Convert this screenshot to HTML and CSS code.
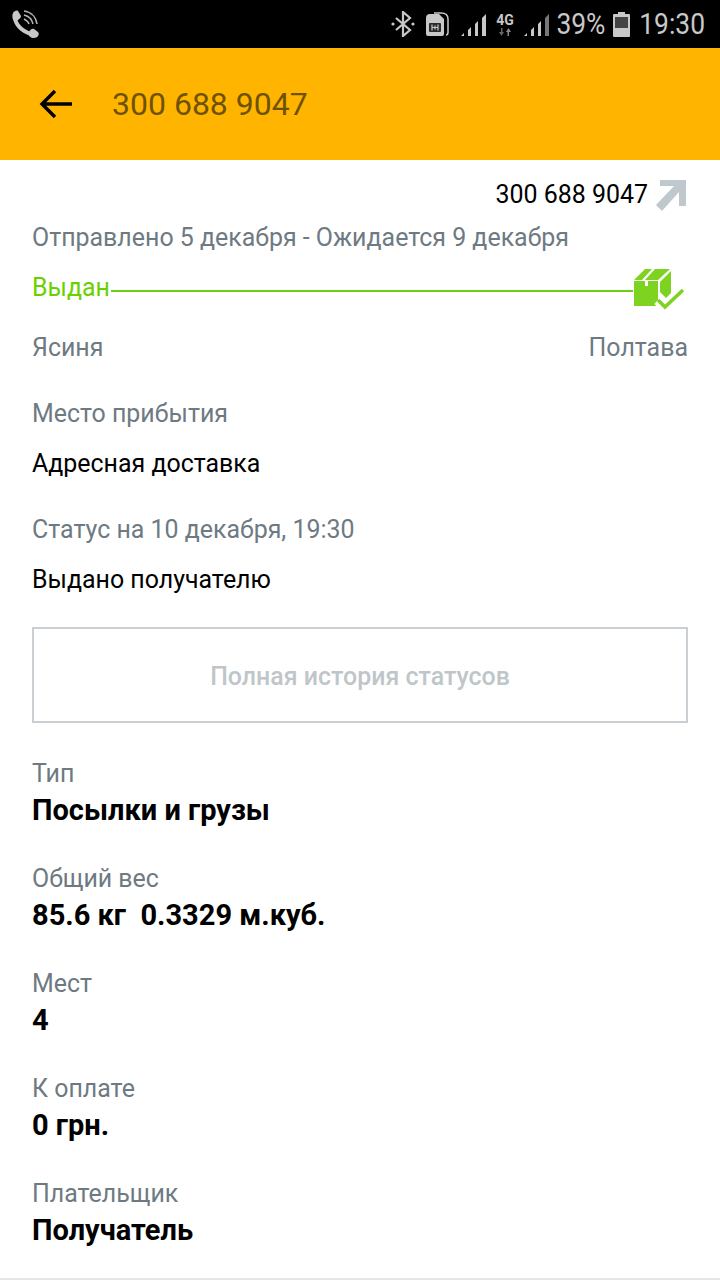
FILE: index.html
```html
<!DOCTYPE html>
<html>
<head>
    <meta charset="UTF-8">
    <link rel="stylesheet" href="styles.css">
</head>
<body>
    <div class="statusbar">
        <svg class="st-call" width="32" height="32" viewBox="0 0 32 32">
            <path d="M6 9c0 7 7 15 17 17" fill="none" stroke="#c8c8c8" stroke-width="4"/>
            <path d="M4 5c1-2 4-3 5-2l3 5c0 2-2 3-3 4l-4 1C3 11 3 7 4 5zM20 24c1-2 3-4 5-3l4 3c1 1 1 3 0 4-1 2-4 2-6 2l-3-2z" fill="#c8c8c8"/>
            <path d="M15 3c7 1 12 6 13 13M15 7c4 1 8 4 9 9M15 11c2 1 4 2 5 5" fill="none" stroke="#b4b4b4" stroke-width="1.500"/>
        </svg>
        <div class="st-right">
            <svg class="st-bt" width="24" height="26" viewBox="0 0 24 26">
                <path d="M5 7l14 12-7 6V1l7 6L5 19" fill="none" stroke="#c8c8c8" stroke-width="2.200"/>
                <circle cx="2" cy="13" r="1.600" fill="#c8c8c8"/><circle cx="22" cy="13" r="1.600" fill="#c8c8c8"/>
            </svg>
            <svg class="st-sim" width="23" height="24" viewBox="0 0 23 24">
                <path d="M8 1h7c4 0 7 2 7 6v13c0 2-1 3-2 3" fill="none" stroke="#c8c8c8" stroke-width="1.500"/>
                <path d="M4 2h9l5 5v15a2 2 0 0 1-2 2H2a2 2 0 0 1-2-2V6a4 4 0 0 1 4-4z" fill="#c8c8c8"/>
                <rect x="3" y="11" width="12" height="9" rx="1" fill="#2a2a2a"/>
                <path d="M6 12.500v6M9 13.500v4M12 12.500v6M6 15.500h6" stroke="#c8c8c8" stroke-width="1.200"/>
            </svg>
            <svg class="st-sig" width="25" height="22" viewBox="0 0 25 22">
                <path d="M0 22l3-3v3zM7 22v-6l3-3v9zM14 22V10l3-3v15zM21 22V4l4-4v22z" fill="#c8c8c8"/>
            </svg>
            <div class="st-net">
                <span class="st-4g">4G</span>
                <svg width="14" height="8" viewBox="0 0 14 8">
                    <path d="M3 0v4H1l2.500 4L6 4H4.500V0z" fill="#666"/><path d="M11 8V4h2l-2.500-4L8 4h1.500v4z" fill="#8a8a8a"/>
                </svg>
            </div>
            <svg class="st-sig" width="25" height="22" viewBox="0 0 25 22">
                <path d="M0 22l3-3v3zM7 22v-6l3-3v9zM14 22V10l3-3v15z" fill="#c8c8c8"/><path d="M21 22V4l4-4v22z" fill="#777"/>
            </svg>
            <span class="st-text st-batt">39%</span>
            <svg class="st-battery" width="17" height="25" viewBox="0 0 17 25">
                <path d="M5 0h7v2h4a1 1 0 0 1 1 1v21a1 1 0 0 1-1 1H1a1 1 0 0 1-1-1V3a1 1 0 0 1 1-1h4z" fill="#c8c8c8"/>
                <rect x="2" y="5" width="13" height="11" fill="#444"/>
            </svg>
            <span class="st-text st-time">19:30</span>
        </div>
    </div>

    <div class="toolbar">
        <svg class="back" width="36" height="32" viewBox="0 0 36 32">
            <path d="M34 16H4M17 3L4 16l13 13" fill="none" stroke="#000" stroke-width="3.400"/>
        </svg>
        <span class="toolbar-title">300 688 9047</span>
    </div>

    <div class="content">
        <div class="number-row">
            <span>300 688 9047</span>
            <svg width="30" height="31" viewBox="0 0 30 31">
                <path d="M4 0H30V26H23V12L6 31 0 25 18 6H4z" fill="#bfc8cc"/>
            </svg>
        </div>
        <div class="grey sent">Отправлено 5 декабря - Ожидается 9 декабря</div>

        <div class="track">
            <span class="track-label">Выдан</span>
            <div class="track-line"></div>
            <svg class="track-box" width="52" height="42" viewBox="0 0 52 42">
                <path d="M1 13H12V18H15V13H25V38H1z" fill="#7ed321"/>
                <path d="M1 12L12 1H19L9 12zM22 1H37L25 12H12z" fill="#7ed321"/>
                <path d="M27 14L38 3V25L33 30 27 24z" fill="#7ed321"/>
                <path d="M24 33l8 7 19-18" fill="none" stroke="#fff" stroke-width="8"/>
                <path d="M25 32l7 7 18-17" fill="none" stroke="#7ed321" stroke-width="3.600"/>
            </svg>
        </div>

        <div class="cities grey">
            <span>Ясиня</span>
            <span>Полтава</span>
        </div>

        <div class="grey place-label">Место прибытия</div>
        <div class="plain place-value">Адресная доставка</div>
        <div class="grey status-label">Статус на 10 декабря, 19:30</div>
        <div class="plain status-value">Выдано получателю</div>

        <div class="history">Полная история статусов</div>

        <div class="info">
            <div class="grey">Тип</div>
            <div class="strong">Посылки и грузы</div>
        </div>
        <div class="info">
            <div class="grey">Общий вес</div>
            <div class="strong">85.6 кг&nbsp; 0.3329 м.куб.</div>
        </div>
        <div class="info">
            <div class="grey">Мест</div>
            <div class="strong">4</div>
        </div>
        <div class="info">
            <div class="grey">К оплате</div>
            <div class="strong">0 грн.</div>
        </div>
        <div class="info">
            <div class="grey">Плательщик</div>
            <div class="strong">Получатель</div>
        </div>
    </div>
    <div class="bottom-edge"></div>
</body>
</html>
```
FILE: styles.css
```css
* {
    box-sizing: border-box;
}

html, body {
    margin: 0;
    height: 1280px;
    overflow: hidden;
}

body {
    position: relative;
    background: #fff;
    font-family: Roboto, "Noto Sans", sans-serif;
    font-size: 24.95px;
    color: #000;
}

.statusbar {
    height: 48px;
    background: #000;
    display: flex;
    align-items: center;
    justify-content: space-between;
    padding: 0 15px 0 9px;
}

.st-right {
    display: flex;
    align-items: center;
}

.st-bt {
    margin-right: 11px;
}

.st-sim {
    margin-right: 12px;
}

.st-sig {
    margin-top: 1px;
}

.st-net {
    display: flex;
    flex-direction: column;
    align-items: center;
    width: 20px;
    margin: 0 9px;
}

.st-4g {
    font-size: 14px;
    font-weight: 700;
    line-height: 16px;
    color: #c8c8c8;
}

.st-text {
    font-size: 29px;
    color: #c8c8c8;
    line-height: 48px;
    transform: scaleX(0.91);
}

.st-batt {
    margin: 0 5px 0 5px;
}

.st-time {
    margin: 0 -3px 0 6px;
}

.toolbar {
    height: 112px;
    background: #ffb500;
    display: flex;
    align-items: center;
    padding: 0 0 0 38px;
}

.back {
    margin-right: 38px;
}

.toolbar-title {
    font-size: 32px;
    color: #6f5200;
}

.content {
    padding: 19px 32px 0;
}

.grey {
    color: #6e7a82;
}

.number-row {
    display: flex;
    justify-content: flex-end;
    align-items: center;
    gap: 8px;
    height: 32px;
    line-height: 32px;
}

.number-row svg {
    margin-right: 2px;
}

.sent {
    line-height: 30px;
    margin-top: 12px;
}

.track {
    display: flex;
    align-items: center;
    height: 44px;
    margin-top: 16px;
}

.track-label {
    color: #6ad100;
    margin-bottom: 8px;
}

.track-line {
    flex: 1;
    height: 2px;
    margin-left: 1px;
    background: #6dcc16;
}

.track-box {
    align-self: flex-start;
    margin-top: -1px;
    margin-right: 3px;
}

.cities {
    display: flex;
    justify-content: space-between;
    line-height: 30px;
    margin-top: 20px;
}

.place-label {
    line-height: 30px;
    margin-top: 36px;
}

.place-value {
    line-height: 30px;
    margin-top: 20px;
}

.status-label {
    line-height: 30px;
    margin-top: 36px;
}

.status-value {
    line-height: 30px;
    margin-top: 20px;
}

.history {
    height: 96px;
    margin-top: 32px;
    padding-top: 3px;
    border: 2px solid #c9cfd2;
    display: flex;
    align-items: center;
    justify-content: center;
    font-weight: 500;
    color: #bfc6ca;
}

.info {
    margin-bottom: 33px;
    line-height: 30px;
}

.history + .info {
    margin-top: 36px;
}

.strong {
    font-size: 29px;
    font-weight: 700;
    line-height: 42px;
}

.bottom-edge {
    position: absolute;
    left: 0;
    right: 0;
    bottom: 0;
    height: 2px;
    background: #e6e6ea;
}
```
